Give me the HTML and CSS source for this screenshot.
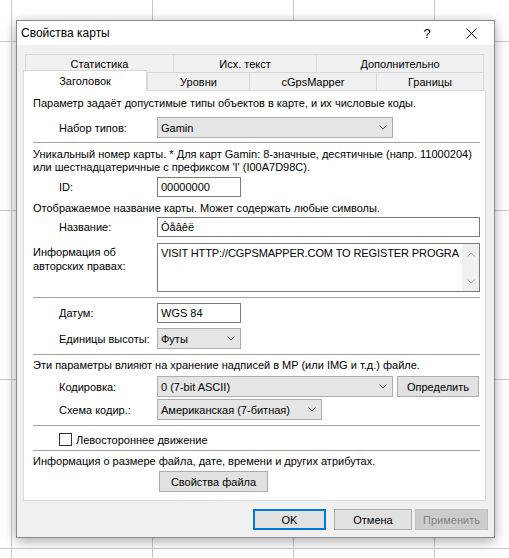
FILE: index.html
```html
<!DOCTYPE html>
<html lang="ru">
<head>
<meta charset="utf-8">
<title>Свойства карты</title>
<link rel="stylesheet" href="styles.css">
</head>
<body>
<div class="dialog">
  <div class="titlebar">
    <span class="title">Свойства карты</span>
    <span class="tb-btn help">?</span>
    <span class="tb-btn close">
      <svg width="11" height="11" viewBox="0 0 11 11"><path d="M0.5 0.5 L10.5 10.5 M10.5 0.5 L0.5 10.5" stroke="#000" stroke-width="1" fill="none"/></svg>
    </span>
  </div>
  <div class="content">
    <div class="tabrow back">
      <div class="tab w148">Статистика</div>
      <div class="tab w143">Исх. текст</div>
      <div class="tab w168 last">Дополнительно</div>
    </div>
    <div class="tabrow front">
      <div class="tab active w124">Заголовок</div>
      <div class="tab w102">Уровни</div>
      <div class="tab w127">cGpsMapper</div>
      <div class="tab w108 last">Границы</div>
    </div>
    <div class="panel">
      <p class="note m6">Параметр задаёт допустимые типы объектов в карте, и их числовые коды.</p>
      <div class="field h21 m7">
        <span class="label">Набор типов:</span>
        <div class="combo w236"><span class="ctext">Gamin</span><svg class="chev" width="8" height="5" viewBox="0 0 8 5"><path d="M0.5 0.5 L4 4 L7.5 0.5" fill="none" stroke="#606060"/></svg></div>
      </div>
      <div class="sep m4"></div>
      <p class="note m5">Уникальный номер карты. * Для карт Gamin: 8-значные, десятичные (напр. 11000204)<br>или шестнадцатеричные с префиксом 'I' (I00A7D98C).</p>
      <div class="field h20 m3">
        <span class="label">ID:</span>
        <div class="edit w84">00000000</div>
      </div>
      <p class="note m5">Отображаемое название карты. Может содержать любые символы.</p>
      <div class="field h20 m2">
        <span class="label">Название:</span>
        <div class="edit w323">Òåâêë</div>
      </div>
      <div class="field tall m6">
        <span class="label flush">Информация об<br>авторских правах:</span>
        <div class="memo">
          <div class="memo-text">VISIT HTTP://CGPSMAPPER.COM TO REGISTER PROGRA</div>
          <div class="vscroll">
            <svg width="8" height="5" viewBox="0 0 8 5"><path d="M0.5 4.5 L4 1 L7.5 4.5" fill="none" stroke="#a6a6a6"/></svg>
            <svg width="8" height="5" viewBox="0 0 8 5"><path d="M0.5 0.5 L4 4 L7.5 0.5" fill="none" stroke="#a6a6a6"/></svg>
          </div>
        </div>
      </div>
      <div class="sep m5"></div>
      <div class="field h20 m5">
        <span class="label">Датум:</span>
        <div class="edit w84">WGS 84</div>
      </div>
      <div class="field h21 m5">
        <span class="label">Единицы высоты:</span>
        <div class="combo w84"><span class="ctext">Футы</span><svg class="chev" width="8" height="5" viewBox="0 0 8 5"><path d="M0.5 0.5 L4 4 L7.5 0.5" fill="none" stroke="#606060"/></svg></div>
      </div>
      <div class="sep m5"></div>
      <p class="note m4">Эти параметры влияют на хранение надписей в MP (или IMG и т.д.) файле.</p>
      <div class="field h21 m4">
        <span class="label">Кодировка:</span>
        <div class="combo w236"><span class="ctext">0 (7-bit ASCII)</span><svg class="chev" width="8" height="5" viewBox="0 0 8 5"><path d="M0.5 0.5 L4 4 L7.5 0.5" fill="none" stroke="#606060"/></svg></div>
        <div class="btn detect">Определить</div>
      </div>
      <div class="field h21 m2">
        <span class="label">Схема кодир.:</span>
        <div class="combo w165"><span class="ctext">Американская (7-битная)</span><svg class="chev" width="8" height="5" viewBox="0 0 8 5"><path d="M0.5 0.5 L4 4 L7.5 0.5" fill="none" stroke="#606060"/></svg></div>
      </div>
      <div class="sep m5"></div>
      <div class="check-row m7">
        <span class="checkbox"></span>
        <span class="check-label">Левостороннее движение</span>
      </div>
      <div class="sep m4"></div>
      <p class="note m4">Информация о размере файла, дате, времени и других атрибутах.</p>
      <div class="file-row m3">
        <div class="btn fileprops">Свойства файла</div>
      </div>
    </div>
    <div class="buttons">
      <div class="btn dlg ok">OK</div>
      <div class="btn dlg cancel">Отмена</div>
      <div class="btn dlg apply">Применить</div>
    </div>
  </div>
</div>
</body>
</html>
```

FILE: styles.css
```css
* { box-sizing: border-box; }

html, body {
  margin: 0;
  height: 100%;
}

body {
  font-family: "Liberation Sans", Arial, sans-serif;
  font-size: 11px;
  color: #000;
  background-color: #fff;
  background-image:
    linear-gradient(to right, #c9c9c9 1px, transparent 1px),
    linear-gradient(to bottom, #c9c9c9 1px, transparent 1px);
  background-size: 141px 100%, 100% 169px;
  background-position: 11px 0, 0 41px;
  padding: 20px 0 0 16px;
  overflow: hidden;
}

.dialog {
  width: 479px;
  height: 518px;
  background: #f0f0f0;
  border: 1px solid #8a8a8a;
  box-shadow: 0 3px 12px rgba(0, 0, 0, 0.35);
  display: flex;
  flex-direction: column;
}

.titlebar {
  flex: none;
  height: 24px;
  background: #fff;
  display: flex;
  align-items: center;
  padding-left: 4px;
}

.title {
  flex: 1;
  font-size: 12px;
}

.tb-btn {
  height: 24px;
  display: flex;
  align-items: center;
  justify-content: center;
}

.help {
  width: 44px;
  font-size: 13px;
  padding-left: 2px;
}

.close {
  width: 46px;
}

.content {
  flex: 1;
  padding: 9px 6px 0 6px;
}

.tabrow {
  display: flex;
  height: 18px;
}

.tabrow.back { margin-left: 2px; }

.tabrow.front { align-items: flex-end; }

.tab {
  height: 18px;
  border: 1px solid #d9d9d9;
  border-bottom: none;
  border-right: none;
  background: #f0f0f0;
  display: flex;
  align-items: center;
  justify-content: center;
  white-space: nowrap;
}

.tab.last { border-right: 1px solid #d9d9d9; }

.tab.active {
  height: 21px;
  margin-top: -2px;
  margin-bottom: -1px;
  background: #fff;
  border-right: 1px solid #d9d9d9;
  position: relative;
  z-index: 1;
}

.w148 { width: 148px; }
.w143 { width: 143px; }
.w168 { width: 168px; }
.w124 { width: 124px; }
.w102 { width: 102px; }
.w127 { width: 127px; }
.w108 { width: 108px; }

.panel {
  width: 463px;
  background: #fff;
  border: 1px solid #d9d9d9;
  padding: 0 5px 8px 9px;
}

.note {
  margin: 0;
  line-height: 13px;
  white-space: nowrap;
}

.m2 { margin-top: 2px; }
.m3 { margin-top: 3px; }
.m4 { margin-top: 4px; }
.m5 { margin-top: 5px; }
.m6 { margin-top: 6px; }
.m7 { margin-top: 7px; }

.sep {
  height: 1px;
  background: #a0a0a0;
}

.field {
  display: flex;
  align-items: center;
}

.field.h20 { height: 20px; }
.field.h21 { height: 21px; }
.field.tall {
  height: 49px;
  align-items: flex-start;
}

.label {
  width: 124px;
  flex: none;
  padding-left: 26px;
  white-space: nowrap;
}

.label.flush {
  padding-left: 0;
  padding-top: 2px;
  line-height: 14px;
}

.edit {
  height: 20px;
  border: 1px solid #7a7a7a;
  background: #fff;
  padding-left: 3px;
  display: flex;
  align-items: center;
  white-space: nowrap;
}

.w84 { width: 84px; }
.w323 { width: 323px; }
.w236 { width: 236px; }
.w165 { width: 165px; }

.combo {
  height: 21px;
  border: 1px solid #adadad;
  background: #e5e5e5;
  display: flex;
  align-items: center;
  padding: 0 5px 0 3px;
}

.ctext {
  flex: 1;
  white-space: nowrap;
}

.chev { flex: none; }

.memo {
  width: 323px;
  height: 49px;
  border: 1px solid #7a7a7a;
  background: #fff;
  display: flex;
}

.memo-text {
  flex: 1;
  min-width: 0;
  padding: 3px 0 0 3px;
  line-height: 13px;
  white-space: nowrap;
  letter-spacing: -0.1px;
}

.vscroll {
  width: 17px;
  flex: none;
  background: #f0f0f0;
  display: flex;
  flex-direction: column;
  align-items: center;
  justify-content: space-between;
  padding: 8px 0 7px;
}

.btn {
  height: 21px;
  border: 1px solid #adadad;
  background: #e1e1e1;
  display: flex;
  align-items: center;
  justify-content: center;
  white-space: nowrap;
}

.detect {
  width: 82px;
  margin-left: 4px;
}

.check-row {
  height: 13px;
  display: flex;
  align-items: center;
  padding-left: 26px;
}

.checkbox {
  width: 13px;
  height: 13px;
  border: 1px solid #333;
  background: #fff;
  flex: none;
}

.check-label {
  margin-left: 4px;
  white-space: nowrap;
}

.file-row {
  display: flex;
  padding-left: 126px;
}

.fileprops { width: 109px; }

.buttons {
  display: flex;
  justify-content: flex-end;
  margin-top: 8px;
}

.dlg { width: 73px; }

.ok {
  border: 2px solid #0078d7;
  margin-right: 8px;
}

.cancel {
  width: 78px;
  margin-right: 3px;
}

.apply {
  background: #cccccc;
  border-color: #bfbfbf;
  color: #838383;
}
```
